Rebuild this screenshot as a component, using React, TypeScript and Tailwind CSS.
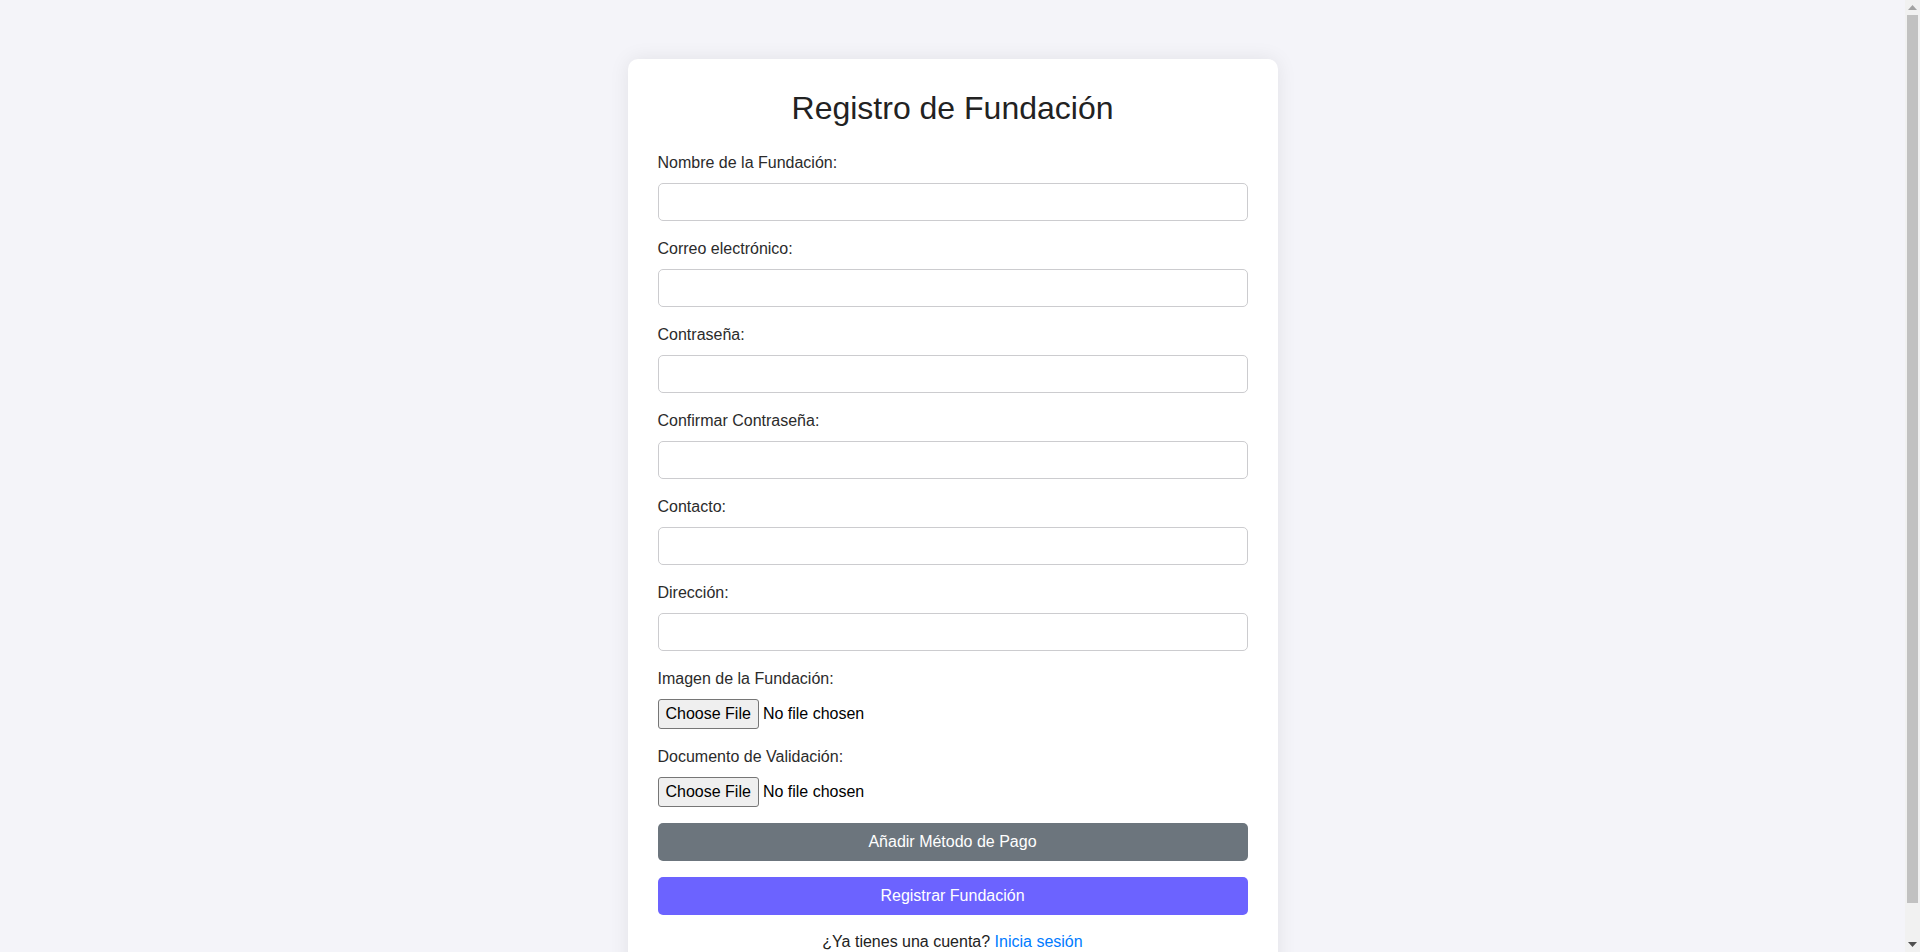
import React from 'react';

const textFields = [
  { id: 'nombre', label: 'Nombre de la Fundación:', type: 'text' },
  { id: 'correo', label: 'Correo electrónico:', type: 'email' },
  { id: 'password', label: 'Contraseña:', type: 'password' },
  { id: 'confirm', label: 'Confirmar Contraseña:', type: 'password' },
  { id: 'contacto', label: 'Contacto:', type: 'text' },
  { id: 'direccion', label: 'Dirección:', type: 'text' },
];

const fileFields = [
  { id: 'imagen', label: 'Imagen de la Fundación:' },
  { id: 'documento', label: 'Documento de Validación:' },
];

const FilePicker: React.FC = () => (
  <div className="flex items-center h-[30px]">
    <button
      type="button"
      className="h-[30px] px-[7px] border border-[#767676] rounded-[3px] bg-[#efefef] text-black text-[16px] leading-[normal]"
    >
      Choose File
    </button>
    <span className="ml-[4px] text-[16px] leading-[normal] text-black">No file chosen</span>
  </div>
);

// classic browser scrollbar on the right edge
const Scrollbar: React.FC = () => (
  <div className="w-[15px] h-screen bg-[#f1f1f1] flex flex-col items-center shrink-0">
    <div className="h-[15px] flex items-center justify-center">
      <svg width="9" height="5" viewBox="0 0 9 5"><path d="M4.5 0L9 5H0z" fill="#a3a3a3" /></svg>
    </div>
    <div className="w-[11px] h-[888px] bg-[#c1c1c1]" />
    <div className="flex-1" />
    <div className="h-[15px] flex items-center justify-center">
      <svg width="9" height="5" viewBox="0 0 9 5"><path d="M0 0H9L4.5 5z" fill="#505050" /></svg>
    </div>
  </div>
);

export default function App() {
  return (
    <div
      className="flex h-screen overflow-hidden bg-[#f4f4f9] text-[#333] leading-[normal]"
      style={{ fontFamily: '"Liberation Sans", Arial, sans-serif' }}
    >
      <div className="flex-1 h-screen overflow-hidden">
        <div className="pt-[59px] pb-[59px]">
          <div className="mx-auto w-[650px] bg-white rounded-[10px] shadow-[0_0_20px_rgba(0,0,0,0.08)] px-[30px] pt-[31px] pb-[30px]">
            <h1 className="text-[32px] leading-[normal] font-normal text-center text-[#222] mb-[27px]">
              Registro de Fundación
            </h1>

            <form onSubmit={e => e.preventDefault()}>
              {textFields.map(f => (
                <div key={f.id} className="mb-[19px]">
                  <label htmlFor={f.id} className="block text-[16px] leading-[normal] mb-[11px] text-[#2b2b2b]">
                    {f.label}
                  </label>
                  <input
                    id={f.id}
                    type={f.type}
                    className="block w-full h-[38px] px-[10px] border border-[#cccccf] rounded-[5px] bg-white text-[14px] outline-none"
                  />
                </div>
              ))}

              {fileFields.map((f, i) => (
                <div key={f.id} className={i === fileFields.length - 1 ? 'mb-[16px]' : 'mb-[19px]'}>
                  <label className="block text-[16px] leading-[normal] mb-[11px] text-[#2b2b2b]">{f.label}</label>
                  <FilePicker />
                </div>
              ))}

              <button
                type="button"
                className="block w-full h-[38px] rounded-[5px] bg-[#6c757d] text-white text-[16px] leading-[normal] mb-[16px]"
              >
                Añadir Método de Pago
              </button>

              <button
                type="submit"
                className="block w-full h-[38px] rounded-[5px] bg-[#6c63ff] text-white text-[16px] leading-[normal]"
              >
                Registrar Fundación
              </button>
            </form>

            <p className="mt-[18px] text-center text-[16px] leading-[normal] text-[#222]">
              ¿Ya tienes una cuenta?{' '}
              <a href="#" className="text-[#007bff]">
                Inicia sesión
              </a>
            </p>
          </div>
        </div>
      </div>
      <Scrollbar />
    </div>
  );
}
